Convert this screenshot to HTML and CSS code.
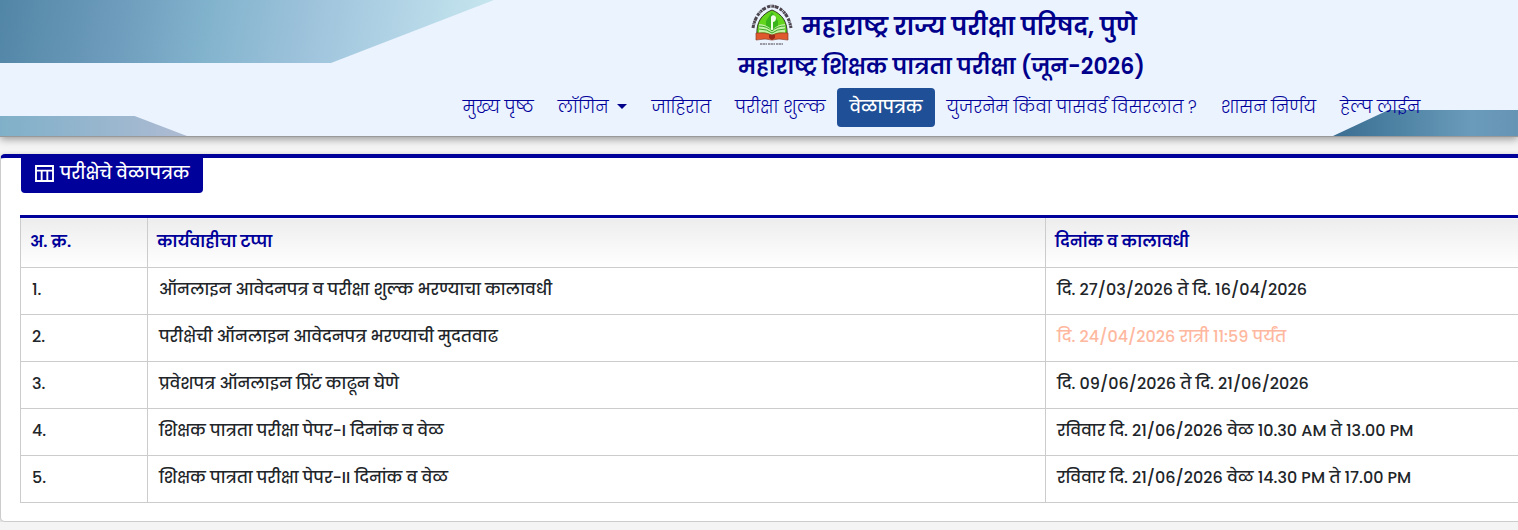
FILE: index.html
```html
<!DOCTYPE html>
<html lang="mr">
  <head>
    <meta charset="UTF-8" />
    <meta name="viewport" content="width=device-width, initial-scale=1.0" />
    <title>महाराष्ट्र राज्य परीक्षा परिषद, पुणे</title>
    <link rel="stylesheet" href="styles.css">
  </head>
  <body>
    <header class="header">
      <!-- background shapes -->
      <div class="shape shape-top"></div>
      <div class="shape shape-left"></div>
      <div class="shape shape-right"></div>

      <div class="header-inner">
        <div class="brand">
          <svg class="logo" viewBox="0 0 42 42" aria-hidden="true">
            <path d="M2 24C4 12 11 3 21 2C31 3 38 12 40 24" fill="none" stroke="#4d464f" stroke-width="3" stroke-dasharray="3 .6 1 .5 2 .5 4 1.5"/>
            <path d="M6 31C5 18 11 10 21 6C31 10 37 18 36 31Z" fill="#62d51c" stroke="#333b24" stroke-width="1"/>
            <path d="M21 8L15 17V26L21 30L27 26V17Z" fill="#38b51c"/>
            <path d="M20 28V13C21 10 25 11 25 14C25 17 23 18 22 18V28Z" fill="#f1ffe8"/>
            <path d="M8 20Q15 20 21 26Q27 20 34 20V29Q27 27 21 31Q15 27 8 29Z" fill="#c4f3a5"/>
            <path d="M8 22Q16 22 21 27Q26 22 34 22M8 25Q16 25 21 29Q26 25 34 25" fill="none" stroke="#39a526" stroke-width="1"/>
            <path d="M5 29Q15 28 21 31Q27 28 37 29V36Q27 34 21 36Q15 34 5 36Z" fill="#e0592c" stroke="#8d3c22" stroke-width=".7"/>
            <path d="M18 31H24V34L21 36L18 34Z" fill="#9b2818"/>
            <path d="M9 40H33" stroke="#9b9ba5" stroke-width="2" stroke-dasharray="2 .5 3 .5 1 1"/>
          </svg>
          <h1>महाराष्ट्र राज्य परीक्षा परिषद, पुणे</h1>
        </div>
        <h2>महाराष्ट्र शिक्षक पात्रता परीक्षा (जून-2026)</h2>
        <nav class="menu">
          <a href="#">मुख्य पृष्ठ</a>
          <a href="#" class="dropdown">लॉगिन</a>
          <a href="#">जाहिरात</a>
          <a href="#">परीक्षा शुल्क</a>
          <a href="#" class="active">वेळापत्रक</a>
          <a href="#">युजरनेम किंवा पासवर्ड विसरलात ?</a>
          <a href="#">शासन निर्णय</a>
          <a href="#">हेल्प लाईन</a>
        </nav>
      </div>
    </header>

    <main class="card">
      <div class="card-title">
        <svg class="icon" viewBox="0 0 20 18" aria-hidden="true">
          <path d="M1 1H19V17H1ZM1 6H19M7 6V17M13 6V17" fill="none" stroke="currentColor" stroke-width="2"/>
        </svg>
        <span>परीक्षेचे वेळापत्रक</span>
      </div>
      <table class="schedule">
        <thead>
          <tr>
            <th class="col-no">अ. क्र.</th>
            <th class="col-stage">कार्यवाहीचा टप्पा</th>
            <th>दिनांक व कालावधी</th>
          </tr>
        </thead>
        <tbody>
          <tr>
            <td>1.</td>
            <td>ऑनलाइन आवेदनपत्र व परीक्षा शुल्क भरण्याचा कालावधी</td>
            <td>दि. 27/03/2026 ते दि. 16/04/2026</td>
          </tr>
          <tr>
            <td>2.</td>
            <td>परीक्षेची ऑनलाइन आवेदनपत्र भरण्याची मुदतवाढ</td>
            <td class="extended">दि. 24/04/2026 रात्री 11:59 पर्यंत</td>
          </tr>
          <tr>
            <td>3.</td>
            <td>प्रवेशपत्र ऑनलाइन प्रिंट काढून घेणे</td>
            <td>दि. 09/06/2026 ते दि. 21/06/2026</td>
          </tr>
          <tr>
            <td>4.</td>
            <td>शिक्षक पात्रता परीक्षा पेपर-I दिनांक व वेळ</td>
            <td>रविवार दि. 21/06/2026 वेळ 10.30 AM ते 13.00 PM</td>
          </tr>
          <tr>
            <td>5.</td>
            <td>शिक्षक पात्रता परीक्षा पेपर-II दिनांक व वेळ</td>
            <td>रविवार दि. 21/06/2026 वेळ 14.30 PM ते 17.00 PM</td>
          </tr>
        </tbody>
      </table>
    </main>
  </body>
</html>
```

FILE: styles.css
```css
* {
  box-sizing: border-box;
}
body {
  margin: 0;
  background: #f4f4f4;
  color: #212529;
  font-family: Poppins, "Noto Sans", sans-serif;
  font-size: 16px;
  font-weight: 500;
  line-height: 24px;
  overflow-x: hidden;
}
.header {
  position: relative;
  padding: 3px 0 9px 365px;
  background: #ebf3ff;
  border-bottom: 1px solid #999;
  box-shadow: 0 2px 8px rgba(0, 0, 0, 0.4);
}
.shape {
  position: absolute;
}
.shape-top {
  top: 0;
  left: 0;
  width: 494px;
  height: 63px;
  background: linear-gradient(100deg, #5286a6, #6f9dbd 25%, #82b3cd 42%, #9bc1da 60%, #accfe3 75%, #c8e8ef);
  clip-path: polygon(0 0, 100% 0, 67% 100%, 0 100%);
}
.shape-left {
  bottom: 0;
  left: 0;
  width: 187px;
  height: 20px;
  background: linear-gradient(90deg, #80b0c9, #9ab7cf 60%, #aebbd2);
  clip-path: polygon(0 0, 72% 0, 100% 100%, 0 100%);
}
.shape-right {
  bottom: 0;
  right: 0;
  width: 185px;
  height: 26px;
  background: linear-gradient(90deg, #3b6d91, #4e83a4 35%, #6b9bba 75%, #6594b5);
  clip-path: polygon(30% 0, 100% 0, 100% 100%, 0 100%);
}
.header-inner {
  position: relative;
  display: flex;
  flex-direction: column;
  align-items: center;
  color: #00008b;
}
.brand {
  display: flex;
  align-items: center;
  gap: 9px;
  padding-left: 5px;
}
.logo {
  width: 42px;
  height: 42px;
}
h1,
h2 {
  margin: 0;
  font-weight: 600;
  white-space: nowrap;
}
h1 {
  padding-top: 4px;
  font-size: 24px;
  line-height: 40px;
}
h2 {
  font-size: 22px;
  line-height: 40px;
}
.menu {
  display: flex;
  margin-top: 1px;
}
.menu a {
  padding: 7px 12px 8px;
  border-radius: 4px;
  color: #00009a;
  font-size: 17px;
  font-weight: 300;
  line-height: 24px;
  text-decoration: none;
  white-space: nowrap;
}
.menu .active {
  background: #1f4f96;
  color: #fff;
  font-weight: 500;
}
.dropdown::after {
  content: "";
  display: inline-block;
  margin-left: 9px;
  vertical-align: 4px;
  border: 5px solid transparent;
  border-top-color: #00008b;
  border-bottom: 0;
}
.card {
  margin: 17px -8px 0 0;
  padding: 0 0 18px 19px;
  background: #fff;
  border: 1px solid #ccc;
  border-top: 4px solid #00009a;
  border-radius: 5px;
  box-shadow: 0 1px 5px rgba(0, 0, 0, 0.2);
}
.card-title {
  display: inline-flex;
  gap: 6px;
  height: 35px;
  margin-left: 1px;
  padding: 3px 13px 3px 14px;
  background: #00009a;
  border-radius: 0 0 4px 4px;
  color: #fff;
  font-size: 17px;
}
.icon {
  width: 19px;
  height: 17px;
  margin-top: 4px;
}
.schedule {
  width: 100%;
  margin-top: 22px;
  border-collapse: collapse;
  table-layout: fixed;
}
.schedule th,
.schedule td {
  height: 47px;
  padding: 9px 11px 12px;
  border: 1px solid #ccc;
  text-align: left;
  white-space: nowrap;
}
.schedule th {
  height: 51px;
  padding: 12px 9px 13px;
  border-top: 3px solid #00009a;
  background: linear-gradient(#ededed, #fff);
  color: #00009a;
  font-weight: 600;
}
.schedule .col-no {
  width: 127px;
}
.schedule .col-stage {
  width: 898px;
}
.schedule .extended {
  color: #ffb8a0;
}
```
